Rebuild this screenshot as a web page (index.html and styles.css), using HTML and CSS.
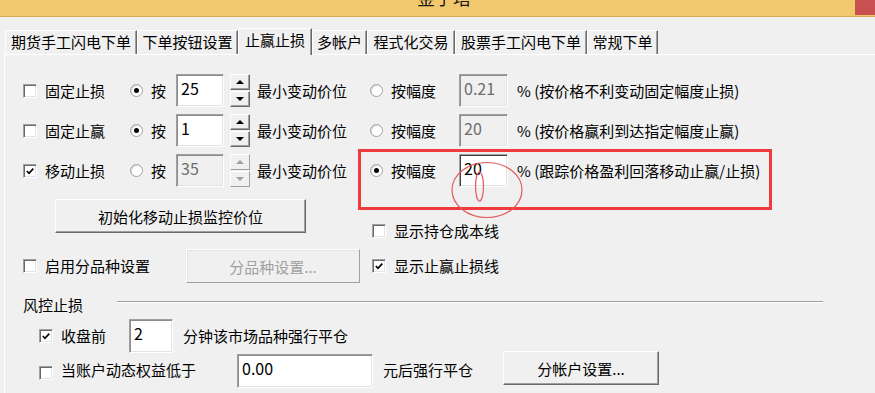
FILE: index.html
```html
<!DOCTYPE html>
<html lang="zh-CN">
<head>
<meta charset="utf-8">
<title>金子塔</title>
<link rel="stylesheet" href="styles.css">
</head>
<body>
<div class="window">
  <div class="titlebar">
    <div class="title">金子塔</div>
    <div class="close"></div>
  </div>
  <div class="tabs">
    <div class="tab t1">期货手工闪电下单</div>
    <div class="tab t2">下单按钮设置</div>
    <div class="tab t3 active">止赢止损</div>
    <div class="tab t4">多帐户</div>
    <div class="tab t5">程式化交易</div>
    <div class="tab t6">股票手工闪电下单</div>
    <div class="tab t7">常规下单</div>
  </div>
  <div class="panel">
    <div class="opt-row first">
      <span class="chk"></span><span class="lbl">固定止损</span>
      <span class="radio on"></span><span class="lbl">按</span>
      <div class="edit">25</div>
      <div class="spin-cell"><div class="spin"><div class="spin-btn"><i class="up"></i></div><div class="spin-btn"><i class="down"></i></div></div></div>
      <span class="lbl">最小变动价位</span>
      <span class="radio"></span><span class="lbl">按幅度</span>
      <div class="edit disabled">0.21</div>
      <span class="lbl pct">% (按价格不利变动固定幅度止损)</span>
    </div>
    <div class="opt-row">
      <span class="chk"></span><span class="lbl">固定止赢</span>
      <span class="radio on"></span><span class="lbl">按</span>
      <div class="edit">1</div>
      <div class="spin-cell"><div class="spin"><div class="spin-btn"><i class="up"></i></div><div class="spin-btn"><i class="down"></i></div></div></div>
      <span class="lbl">最小变动价位</span>
      <span class="radio"></span><span class="lbl">按幅度</span>
      <div class="edit disabled">20</div>
      <span class="lbl pct">% (按价格赢利到达指定幅度止赢)</span>
    </div>
    <div class="opt-row third">
      <span class="chk"><svg class="tick" viewBox="0 0 10 10"><path d="M1.8 5 L4 7.3 L8.3 2.6"/></svg></span><span class="lbl">移动止损</span>
      <span class="radio"></span><span class="lbl">按</span>
      <div class="edit disabled">35</div>
      <div class="spin-cell"><div class="spin off"><div class="spin-btn"><i class="up"></i></div><div class="spin-btn"><i class="down"></i></div></div></div>
      <span class="lbl">最小变动价位</span>
      <span class="radio on"></span><span class="lbl">按幅度</span>
      <div class="edit focus">20</div>
      <span class="lbl pct">% (跟踪价格盈利回落移动止赢/止损)</span>
    </div>

    <div class="mid">
      <div class="mid-left">
        <div class="btn init">初始化移动止损监控价位</div>
        <div class="split-row">
          <span class="chk"></span><span class="lbl">启用分品种设置</span>
          <div class="btn disabled">分品种设置...</div>
        </div>
      </div>
      <div class="mid-right">
        <div class="chk-line"><span class="chk"></span><span class="lbl">显示持仓成本线</span></div>
        <div class="chk-line"><span class="chk"><svg class="tick" viewBox="0 0 10 10"><path d="M1.8 5 L4 7.3 L8.3 2.6"/></svg></span><span class="lbl">显示止赢止损线</span></div>
      </div>
    </div>

    <div class="group-head">
      <span class="lbl">风控止损</span>
      <span class="group-line"></span>
    </div>
    <div class="risk-row close-row">
      <span class="chk"><svg class="tick" viewBox="0 0 10 10"><path d="M1.8 5 L4 7.3 L8.3 2.6"/></svg></span><span class="lbl">收盘前</span>
      <div class="edit">2</div>
      <span class="lbl after">分钟该市场品种强行平仓</span>
    </div>
    <div class="risk-row equity-row">
      <span class="chk"></span><span class="lbl">当账户动态权益低于</span>
      <div class="edit">0.00</div>
      <span class="lbl after">元后强行平仓</span>
      <div class="btn acct">分帐户设置...</div>
    </div>
  </div>

  <div class="annot-box"></div>
  <svg class="annot-circles" viewBox="0 0 100 80" width="100" height="80">
    <ellipse cx="47" cy="40" rx="35" ry="27.5"/>
    <ellipse cx="39.5" cy="36.5" rx="4" ry="14.5"/>
  </svg>
</div>
</body>
</html>
```
FILE: styles.css
```css
* { box-sizing: border-box; }
html, body { margin: 0; padding: 0; }
body {
  width: 875px;
  height: 393px;
  overflow: hidden;
  background: #f0f0f0;
  font-family: "Noto Sans CJK SC", "Microsoft YaHei", sans-serif;
  font-size: 15px;
  color: #000;
}
.window { position: relative; height: 393px; }

/* title bar */
.titlebar {
  height: 17px;
  background: #f1c96c;
  border-bottom: 1px solid #d6ad57;
  display: flex;
  overflow: hidden;
}
.title {
  margin-left: 417px;
  margin-top: -12px;
  font-size: 18px;
  line-height: 18px;
  color: #1a1a1a;
  white-space: nowrap;
}
.close {
  margin-left: auto;
  width: 20px;
  height: 15px;
  background: #c75050;
}

/* tabs */
.tabs {
  display: flex;
  align-items: flex-end;
  height: 26px;
  margin-top: 11px;
  padding-left: 5px;
  position: relative;
  z-index: 1;
}
.tab {
  height: 24px;
  line-height: 22px;
  text-align: center;
  white-space: nowrap;
  background: #f0f0f0;
  border-top: 1px solid #fff;
  border-left: 1px solid #fff;
  border-right: 1px solid #696969;
  box-shadow: inset -1px 0 #a0a0a0;
}
.tab.active { height: 27px; margin-bottom: -1px; }
.t1 { width: 132px; }
.t2 { width: 101px; }
.t3 { width: 74px; }
.t4 { width: 55px; }
.t5 { width: 88px; }
.t6 { width: 132px; }
.t7 { width: 71px; }

/* panel */
.panel {
  margin-left: 4px;
  height: 339px;
  border-top: 1px solid #fff;
  border-left: 1px solid #fff;
}

.lbl { line-height: 22px; white-space: nowrap; }

/* controls */
.chk {
  width: 14px;
  height: 14px;
  background: #fff;
  border: 1px solid;
  border-color: #a0a0a0 #fff #fff #a0a0a0;
  box-shadow: inset 1px 1px #696969, inset -1px -1px #e3e3e3;
  display: flex;
  align-items: center;
  justify-content: center;
}
.tick { width: 10px; height: 10px; }
.tick path { fill: none; stroke: #000; stroke-width: 1.7; }

.radio {
  width: 13px;
  height: 13px;
  border-radius: 50%;
  background: #fff;
  border: 1px solid #a2a2a2;
  box-shadow: inset 1px 1px #d8d8d8;
  display: flex;
  align-items: center;
  justify-content: center;
}
.radio.on::after {
  content: "";
  width: 5px;
  height: 5px;
  border-radius: 50%;
  background: #000;
}

.edit {
  height: 33px;
  background: #fff;
  border: 1px solid;
  border-color: #a0a0a0 #fff #fff #a0a0a0;
  box-shadow: inset 1px 1px #8c8c8c, inset -1px -1px #e3e3e3;
  font-size: 16px;
  line-height: 22px;
  padding: 2px 4px;
  white-space: nowrap;
}
.edit.disabled { background: #f0f0f0; color: #6d6d6d; }
.edit.focus { box-shadow: inset 1px 1px #404040, inset -1px -1px #e3e3e3; }

.spin-cell { padding-left: 6px; }
.spin { display: flex; flex-direction: column; gap: 1px; width: 20px; }
.spin-btn {
  height: 16px;
  background: #f0f0f0;
  border: 1px solid;
  border-color: #fff #696969 #696969 #fff;
  box-shadow: inset -1px -1px #a0a0a0;
  display: flex;
  align-items: center;
  justify-content: center;
}
.spin-btn i { width: 0; height: 0; border-left: 4px solid transparent; border-right: 4px solid transparent; }
.spin-btn .up { border-bottom: 4px solid #000; }
.spin-btn .down { border-top: 4px solid #000; }
.spin.off .spin-btn { border-color: #fff #a0a0a0 #a0a0a0 #fff; box-shadow: none; }
.spin.off .up { border-bottom-color: #a0a0a0; }
.spin.off .down { border-top-color: #a0a0a0; }

.btn {
  height: 34px;
  background: #f0f0f0;
  border: 1px solid;
  border-color: #fff #696969 #696969 #fff;
  box-shadow: inset -1px -1px #a0a0a0;
  display: flex;
  align-items: center;
  justify-content: center;
  white-space: nowrap;
}
.btn.disabled {
  color: #a0a0a0;
  border-color: #fff #a0a0a0 #a0a0a0 #fff;
  box-shadow: inset 1px 1px #e3e3e3;
}

/* option rows */
.opt-row {
  display: grid;
  grid-template-columns: 22px 85px 21px 25px 48px 33px 113px 21px 68px 49px auto;
  align-items: center;
  height: 33px;
  padding-left: 18px;
  margin-top: 7px;
}
.opt-row.first { margin-top: 19px; }
.opt-row.third { margin-top: 7px; }
.pct { padding-left: 9px; }

/* middle section */
.mid { display: flex; margin-top: 12px; }
.mid-left { width: 367px; }
.init { margin-left: 50px; width: 251px; }
.split-row {
  display: grid;
  grid-template-columns: 22px 141px 174px;
  align-items: center;
  height: 34px;
  padding-left: 18px;
  margin-top: 16px;
}
.mid-right { padding-top: 21px; display: flex; flex-direction: column; gap: 13px; }
.chk-line { display: grid; grid-template-columns: 22px auto; align-items: center; height: 22px; }

/* risk group */
.group-head { display: flex; align-items: flex-start; margin-top: 11px; padding-left: 18px; height: 22px; }
.group-line {
  width: 706px;
  margin-left: 34px;
  margin-top: 7px;
  height: 2px;
  border-top: 1px solid #a0a0a0;
  border-bottom: 1px solid #fff;
}
.risk-row { display: grid; align-items: center; padding-left: 34px; }
.close-row {
  grid-template-columns: 22px 68px 44px auto;
  height: 34px;
  margin-top: 3px;
}
.close-row .edit { height: 34px; }
.after { padding-left: 10px; }
.equity-row {
  grid-template-columns: 22px 176px 136px 130px 156px;
  height: 37px;
  margin-top: -2px;
}
.equity-row .edit { height: 34px; align-self: end; }
.equity-row .acct { align-self: start; }
.equity-row .chk { margin-top: 6px; }

/* annotations drawn over the screenshot */
.annot-box {
  position: absolute;
  left: 358px;
  top: 149px;
  width: 414px;
  height: 61px;
  border: 3px solid #ef3b3b;
  pointer-events: none;
}
.annot-circles { position: absolute; left: 440px; top: 150px; pointer-events: none; }
.annot-circles ellipse { fill: none; stroke: #e45a5a; stroke-width: 1.2; }
```
